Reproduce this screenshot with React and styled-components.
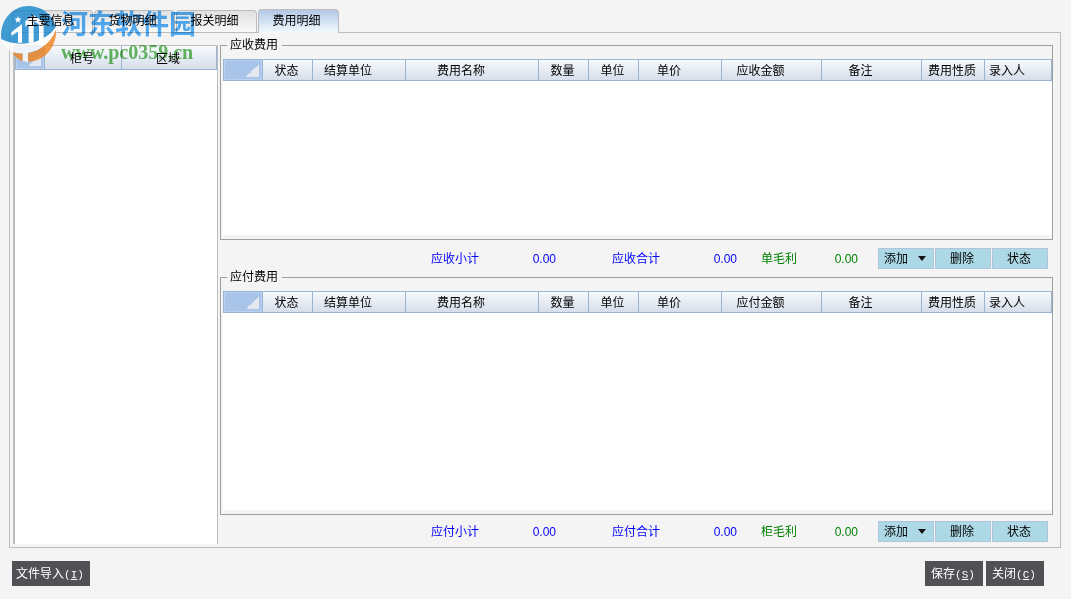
import React, { useState } from "react";
import styled, { createGlobalStyle, css } from "styled-components";

const GlobalStyle = createGlobalStyle`
  * { box-sizing: border-box; }
  body {
    margin: 0;
    background: #f4f4f4;
    color: #000;
    font: 12px/14px "Liberation Sans", "Noto Sans CJK SC", sans-serif;
  }
  button { font: inherit; cursor: pointer; }
`;

const Page = styled.main`
  position: relative;
  display: flex;
  flex-direction: column;
  min-height: 100vh;
  padding: 9px 10px 13px 9px;
`;

const TabBar = styled.div`
  display: flex;
  align-items: flex-end;
  gap: 1px;
  height: 23px;
  padding-left: 3px;
`;

const Tab = styled.button`
  width: 81px;
  height: 22px;
  padding: 0 4px 2px 0;
  border: 1px solid #bdbdbd;
  border-bottom: 0;
  border-radius: 4px 4px 0 0;
  background: linear-gradient(#e0e0e0, #f9f9f9);
  color: #000;
  ${(p) =>
    p.$active &&
    css`
      z-index: 1;
      height: 24px;
      margin-bottom: -1px;
      background: linear-gradient(#b3c8e6, #f2fbff);
    `}
`;

const TabLabel = styled.span`
  position: relative;
  z-index: 3;
`;

const TabPanel = styled.section`
  flex: 1;
  display: flex;
  gap: 2px;
  padding: 5px 7px 0 3px;
  border: 1px solid #bdbdbd;
`;

const ContainerList = styled.div`
  flex: none;
  width: 205px;
  margin: 7px 0 3px;
  border: solid #bdbdbd;
  border-width: 1px 1px 0 2px;
  background: #fff;
`;

const FeeColumn = styled.div`
  flex: 1;
  min-width: 0;
  display: flex;
  flex-direction: column;
`;

const GroupBox = styled.fieldset`
  flex: ${(p) => p.$grow} 1 0;
  display: flex;
  flex-direction: column;
  min-width: 0;
  margin: 0;
  padding: 7px 0 4px 2px;
  border: 1px solid #a0a0a0;
`;

const GroupTitle = styled.legend`
  margin-left: 4px;
  padding: 0 4px 0 3px;
  line-height: 14px;
`;

const GridArea = styled.div`
  flex: 1;
  background: #fff;
`;

const Table = styled.table`
  width: 100%;
  table-layout: fixed;
  border-collapse: separate;
  border-spacing: 0;
`;

const HeadCell = styled.th`
  height: ${(p) => (p.$tall ? 24 : 22)}px;
  padding: 2px ${(p) => (p.$sortable ? 22 : 2)}px 0 0;
  border: solid #9ab5d1;
  border-width: ${(p) => (p.$tall ? 0 : 1)}px 1px 1px 0;
  background: linear-gradient(#f7fafd, #d6deeb);
  font-weight: normal;
  text-align: center;
  white-space: nowrap;
`;

const CornerCell = styled.td`
  padding: 0;
  border: 1px solid #9ab5d1;
  background:
    linear-gradient(135deg, transparent 50%, #e3e8f0 50%) right 3px bottom 3px / 13px 13px no-repeat,
    #a9c4e9;
  box-shadow: inset 0 0 0 1px #b9d0ee;
`;

const SummaryRow = styled.div`
  flex: none;
  display: flex;
  justify-content: flex-end;
  align-items: center;
  gap: 20px;
  padding: ${(p) => (p.$last ? "6px 5px 5px" : "8px 5px 1px")};
`;

const Totals = styled.dl`
  display: flex;
  margin: 0;
`;

const Total = styled.div`
  display: flex;
  justify-content: space-between;
  align-items: center;
  width: ${(p) => (p.$profit ? 97 : 125)}px;
  margin-left: ${(p) => (p.$profit ? 24 : 56)}px;
  color: ${(p) => (p.$profit ? "#008000" : "#0000ff")};
`;

const TotalName = styled.dt`
  line-height: 14px;
`;

const TotalValue = styled.dd`
  margin: 0;
  line-height: 14px;
`;

const Actions = styled.div`
  display: flex;
  gap: 1px;
`;

const ActionButton = styled.button`
  display: flex;
  align-items: center;
  justify-content: ${(p) => (p.$menu ? "space-between" : "center")};
  width: 56px;
  height: 21px;
  padding: 0 7px 0 5px;
  border: 1px solid #b0c4de;
  background: #add8e6;
  color: #000;
`;

const Caret = styled.span`
  border: solid transparent;
  border-width: 5px 4px 0;
  border-top-color: #111;
`;

const Footer = styled.footer`
  display: flex;
  gap: 3px;
  padding: 13px 17px 0 3px;
`;

const CommandButton = styled.button`
  width: ${(p) => (p.$wide ? 78 : 58)}px;
  height: 25px;
  padding: 1px 2px 0 0;
  border: 0;
  background: #515055;
  color: #fff;
  white-space: nowrap;
  ${(p) => p.$pushRight && "margin-left: auto;"}
`;

const Key = styled.span`
  font: 11px/14px "Liberation Mono", monospace;
`;

const Watermark = styled.div`
  position: absolute;
  z-index: 2;
  top: 5px;
  left: 0;
  padding-left: 61px;
  pointer-events: none;
  mix-blend-mode: multiply;
`;

const Logo = styled.svg`
  position: absolute;
  z-index: 2;
  top: 5px;
  left: 0;
  width: 57px;
  height: 58px;
  opacity: 0.8;
  pointer-events: none;
`;

const SiteName = styled.div`
  color: #53b0fa;
  font: bold 27px/36px "Noto Sans CJK SC", sans-serif;
  white-space: nowrap;
`;

const SiteAddress = styled.div`
  color: #66bb5e;
  font: bold 20px/22px "Liberation Serif", serif;
`;

const tabs = ["主要信息", "货物明细", "报关明细", "费用明细"];

const feeColumns = (amount) => [
  { name: "状态", width: 50 },
  { name: "结算单位", width: 93, sortable: true },
  { name: "费用名称", width: 133, sortable: true },
  { name: "数量", width: 50 },
  { name: "单位", width: 50 },
  { name: "单价", width: 83, sortable: true },
  { name: amount, width: 100, sortable: true },
  { name: "备注", width: 100, sortable: true },
  { name: "费用性质", width: 63 },
  { name: "录入人", sortable: true },
];

function Grid({ columns, corner, tall }) {
  return (
    <Table>
      <colgroup>
        <col width={corner} />
        {columns.map((c) => (
          <col key={c.name} width={c.width} />
        ))}
      </colgroup>
      <thead>
        <tr>
          <CornerCell />
          {columns.map((c) => (
            <HeadCell key={c.name} scope="col" $tall={tall} $sortable={c.sortable}>
              {c.name}
            </HeadCell>
          ))}
        </tr>
      </thead>
    </Table>
  );
}

function FeeSection({ title, grow, amount, totals, last }) {
  return (
    <>
      <GroupBox $grow={grow}>
        <GroupTitle>{title}</GroupTitle>
        <GridArea>
          <Grid columns={feeColumns(amount)} corner={40} />
        </GridArea>
      </GroupBox>
      <SummaryRow $last={last}>
        <Totals>
          {totals.map((name, i) => (
            <Total key={name} $profit={i === 2}>
              <TotalName>{name}</TotalName>
              <TotalValue>0.00</TotalValue>
            </Total>
          ))}
        </Totals>
        <Actions>
          <ActionButton type="button" $menu>
            添加
            <Caret />
          </ActionButton>
          <ActionButton type="button">删除</ActionButton>
          <ActionButton type="button">状态</ActionButton>
        </Actions>
      </SummaryRow>
    </>
  );
}

function Command({ label, letter, ...rest }) {
  return (
    <CommandButton type="button" {...rest}>
      {label}
      <Key>
        (<u>{letter}</u>)
      </Key>
    </CommandButton>
  );
}

export default function App() {
  const [active, setActive] = useState(3);
  return (
    <Page>
      <GlobalStyle />
      <TabBar role="tablist">
        {tabs.map((name, i) => (
          <Tab
            key={name}
            type="button"
            role="tab"
            aria-selected={i === active}
            $active={i === active}
            onClick={() => setActive(i)}
          >
            <TabLabel>{name}</TabLabel>
          </Tab>
        ))}
      </TabBar>
      <TabPanel role="tabpanel">
        <ContainerList>
          <Grid
            corner={30}
            tall
            columns={[{ name: "柜号", width: 77 }, { name: "区域" }]}
          />
        </ContainerList>
        <FeeColumn>
          <FeeSection
            title="应收费用"
            grow={189}
            amount="应收金额"
            totals={["应收小计", "应收合计", "单毛利"]}
          />
          <FeeSection
            title="应付费用"
            grow={232}
            amount="应付金额"
            totals={["应付小计", "应付合计", "柜毛利"]}
            last
          />
        </FeeColumn>
      </TabPanel>
      <Footer>
        <Command label="文件导入" letter="I" $wide />
        <Command label="保存" letter="S" $pushRight />
        <Command label="关闭" letter="C" />
      </Footer>
      <Logo viewBox="0 0 171 174" aria-hidden="true">
        <path
          d="M4 103C-3 48 36 3 85 3c42 0 74 28 82 64-14 24-30 38-50 47-38 16-86 13-113-11z"
          fill="#1585cc"
        />
        <path
          d="M168 72c4 52-34 98-84 98-22 0-38-10-46-28 56 14 104-12 130-70z"
          fill="#f0821c"
        />
        <path
          d="M4 103c28 14 70 18 108 5 22-8 42-22 55-41l1 8c-22 52-74 80-130 66C20 134 8 120 4 103z"
          fill="#fff"
        />
        <path d="M34 82l32-25v56H54V80l-20 12z" fill="#fff" />
        <path d="M76 48l25-17v82H86V58l-10 7z" fill="#fff" />
        <path d="M101 31l30 20v54l-14 6V58l-16-10z" fill="#fff" />
        <path d="M68 120h16v52l-16-4z" fill="#fff" />
        <path d="M54 34l3 6 7 1-5 5 1 7-6-4-6 4 1-7-5-5 7-1z" fill="#fff" />
      </Logo>
      <Watermark aria-hidden="true">
        <SiteName>河东软件园</SiteName>
        <SiteAddress>www.pc0359.cn</SiteAddress>
      </Watermark>
    </Page>
  );
}
